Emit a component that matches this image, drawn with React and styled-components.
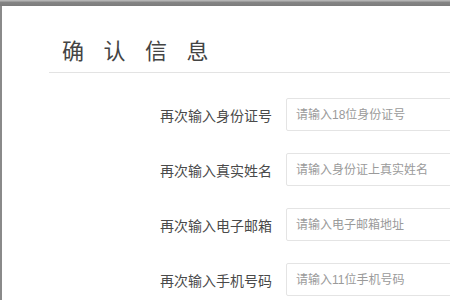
import React from "react";
import styled, { createGlobalStyle } from "styled-components";

const GlobalStyle = createGlobalStyle`
  html, body {
    margin: 0;
    padding: 0;
    background: #fff;
    overflow: hidden;
  }
  body {
    font-family: "Liberation Sans", "Noto Sans CJK SC", sans-serif;
  }
`;

const fields = [
  { label: "再次输入身份证号", placeholder: "请输入18位身份证号" },
  { label: "再次输入真实姓名", placeholder: "请输入身份证上真实姓名" },
  { label: "再次输入电子邮箱", placeholder: "请输入电子邮箱地址" },
  { label: "再次输入手机号码", placeholder: "请输入11位手机号码" },
];

const App = () => {
  return (
    <Window>
      <GlobalStyle />
      <TopBar />
      <Page>
        <Header>
          <Title>确认信息</Title>
        </Header>
        <Form>
          {fields.map((f) => (
            <Row key={f.label}>
              <Label>{f.label}</Label>
              <Input type="text" placeholder={f.placeholder} />
            </Row>
          ))}
        </Form>
      </Page>
    </Window>
  );
};

const Window = styled.div`
  width: 450px;
  height: 300px;
  overflow: hidden;
  display: flex;
  flex-direction: column;
`;

const TopBar = styled.div`
  height: 6px;
  flex-shrink: 0;
  background: linear-gradient(#b4b4b4 0px, #b4b4b4 1px, #858585 2px, #7c7c7c 6px);
`;

const Page = styled.div`
  flex: 1;
  border-left: 2px solid #8a8a8a;
  background: #fff;
`;

const Header = styled.div`
  margin-left: 47px;
  padding: 28px 0 8px 13px;
  border-bottom: 1px solid #e3e3e3;
`;

const Title = styled.h1`
  margin: 0;
  font-family: "Noto Sans CJK SC", sans-serif;
  font-weight: 400;
  font-size: 22px;
  line-height: 30px;
  letter-spacing: 19.5px;
  color: #444;
`;

const Form = styled.div`
  display: flex;
  flex-direction: column;
  gap: 22px;
  padding-top: 25px;
`;

const Row = styled.div`
  display: grid;
  grid-template-columns: 270px 220px;
  column-gap: 14px;
  align-items: center;
`;

const Label = styled.label`
  text-align: right;
  font-family: "Noto Sans CJK SC", sans-serif;
  font-size: 14px;
  line-height: 20px;
  color: #4a4a4a;
`;

const Input = styled.input`
  box-sizing: border-box;
  height: 33px;
  width: 220px;
  margin: 0;
  padding: 0 9px;
  border: 1px solid #e4e4e4;
  border-radius: 2px;
  outline: none;
  font-family: "Liberation Sans", "Noto Sans CJK SC", sans-serif;
  font-size: 12px;
  color: #333;

  &::placeholder {
    color: #9a9a9a;
  }
`;

export default App;
